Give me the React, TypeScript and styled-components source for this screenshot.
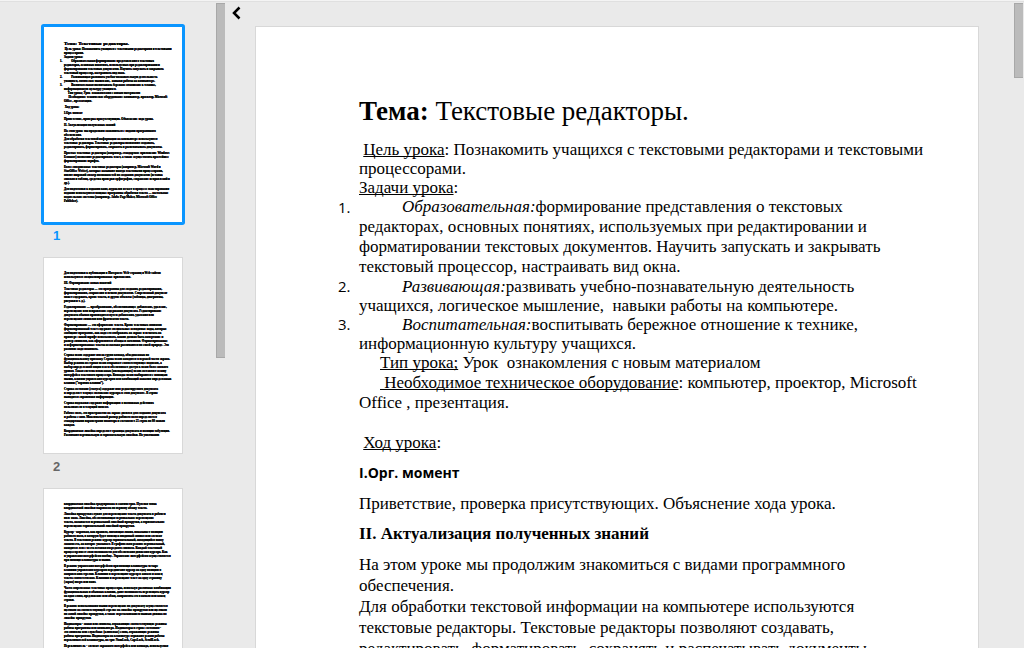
import React from "react";
import styled, { createGlobalStyle } from "styled-components";

const GlobalStyle = createGlobalStyle`
  * { box-sizing: border-box; }
  body { margin: 0; background: #eaeaea; }
`;

const Viewer = styled.div`
  display: flex;
  height: 100vh;
  overflow: hidden;
  border-top: 1px solid #f4f4f4;
  background: #eaeaea;
  font-family: "Liberation Sans", Arial, sans-serif;
`;

const Sidebar = styled.aside`
  display: flex;
  flex: none;
  width: 226px;
  border-top: 1px solid #e0e0e0;
`;

const ThumbList = styled.nav`
  flex: 1;
  display: flex;
  flex-direction: column;
  gap: 8px;
  padding: 24px 0 0 43px;
  overflow: hidden;
`;

const ThumbLink = styled.a`
  flex: none;
  width: 140px;
  color: #000;
  text-decoration: none;
`;

const ThumbPage = styled.span<{ $active?: boolean }>`
  display: block;
  height: 197px;
  padding: 13px 0 0 20px;
  overflow: hidden;
  background: #fff;
  border: 1px solid ${(p) => (p.$active ? "#0a95ff" : "#d8d8d8")};
  border-radius: ${(p) => (p.$active ? "1px" : "0")};
  box-shadow: ${(p) => (p.$active ? "0 0 0 2px #0a95ff" : "none")};
  font: bold 3px/4px "Liberation Serif", "Times New Roman", serif;
  text-shadow: 0 0 0 #000, 0 0 0 #000;
`;

const ThumbTitle = styled.span`
  display: block;
  margin: 1px 0;
  font-size: 5px;
  line-height: 5px;
`;

const ThumbBlock = styled.span<{ $flush?: boolean }>`
  display: block;
  margin-bottom: ${(p) => (p.$flush ? "0" : "2px")};
  white-space: pre;
`;

const ThumbItem = styled(ThumbBlock)`
  margin-left: -4px;
`;

const ThumbLabel = styled.span<{ $active?: boolean }>`
  display: block;
  padding: 5px 0 5px 10px;
  font-size: 13px;
  font-weight: bold;
  line-height: 16px;
  color: ${(p) => (p.$active ? "#0a95ff" : "#666")};
`;

const Scrollbar = styled.div`
  flex: none;
  width: 10px;
  padding-top: 1px;
`;

const ScrollThumb = styled.div<{ $length: number }>`
  width: 9px;
  height: ${(p) => p.$length}px;
  background: #bbb;
  border: 1px solid #a8a8a8;
  border-right: 0;
`;

const Main = styled.main`
  flex: 1;
  min-width: 0;
  display: flex;
  border-top: 1px solid #e0e0e0;
`;

const Collapse = styled.button`
  flex: none;
  display: flex;
  width: 29px;
  height: 24px;
  padding: 4px 0 0 5px;
  border: 0;
  background: none;
`;

const Canvas = styled.div`
  flex: 1;
  min-width: 0;
  padding: 24px 35px 0 0;
`;

const Page = styled.article`
  max-width: 960px;
  padding: 68px 36px 60px 82px;
  background: #fff;
  border: 1px solid #d8d8d8;
  color: #000;
  font: 17px/21px "Liberation Serif", "Times New Roman", serif;
  text-decoration-skip-ink: none;
`;

const Title = styled.h1`
  margin: 0 0 12px;
  padding-left: 21px;
  font-size: 27px;
  line-height: 33px;
  font-weight: normal;
`;

const Text = styled.p<{ $leading?: number; $after?: number }>`
  margin: 0 0 ${(p) => p.$after ?? 0}px;
  padding-left: 21px;
  line-height: ${(p) => p.$leading ?? 21}px;
  white-space: pre-wrap;
`;

const Heading = styled.h2<{ $sans?: boolean }>`
  margin: 0 0 10px;
  padding-left: 21px;
  font-size: ${(p) => (p.$sans ? "14px" : "17px")};
  line-height: 21px;
  font-family: ${(p) => (p.$sans ? '"Open Sans", sans-serif' : "inherit")};
`;

const Goals = styled.ol`
  margin: 0;
  padding: 0;
  list-style: none;
`;

const Goal = styled.li<{ $leading: number }>`
  display: grid;
  grid-template-columns: 21px 1fr;
  line-height: ${(p) => p.$leading}px;
`;

const Num = styled.span`
  font-family: "Open Sans", sans-serif;
  font-size: 15px;
`;

const GoalText = styled.span`
  text-indent: 43px;
  white-space: pre-wrap;
`;

const Indented = styled.span`
  display: block;
  text-indent: 21px;
`;

type Block = { text: string; flush?: boolean; item?: boolean };

const page1: Block[] = [
  { text: " Цель урока: Познакомить учащихся с текстовыми редакторами и текстовыми\nпроцессорами.\nЗадачи урока:", flush: true },
  { text: "1.            Образовательная:формирование представления о текстовых\nредакторах, основных понятиях, используемых при редактировании и\nформатировании текстовых документов. Научить запускать и закрывать\nтекстовый процессор, настраивать вид окна.", flush: true, item: true },
  { text: "2.            Развивающая:развивать учебно-познавательную деятельность\nучащихся, логическое мышление,  навыки работы на компьютере.", flush: true, item: true },
  { text: "3.            Воспитательная:воспитывать бережное отношение к технике,\nинформационную культуру учащихся.", flush: true, item: true },
  { text: "     Тип урока; Урок  ознакомления с новым материалом\n      Необходимое техническое оборудование: компьютер, проектор, Microsoft\nOffice , презентация." },
  { text: " Ход урока:" },
  { text: "I.Орг. момент" },
  { text: "Приветствие, проверка присутствующих. Объяснение хода урока." },
  { text: "II. Актуализация полученных знаний" },
  { text: "На этом уроке мы продолжим знакомиться с видами программного\nобеспечения.\nДля обработки текстовой информации на компьютере используются\nтекстовые редакторы. Текстовые редакторы позволяют создавать,\nредактировать, форматировать, сохранять и распечатывать документы." },
  { text: "Простые текстовые редакторы (например, стандартное приложение Windows\nБлокнот) позволяют редактировать текст, а также осуществлять простейшее\nформатирование шрифта." },
  { text: "Более совершенные текстовые редакторы (например, Microsoft Word и\nStarOffice Writer), которые называют иногда текстовыми процессорами,\nимеют широкий спектр возможностей по созданию документов (вставка\nсписков и таблиц, средства проверки орфографии, сохранение исправлений и\nдр.)." },
  { text: "Для подготовки к изданию книг, журналов и газет в процессе макетирования\nиздания используются мощные программы обработки текста — настольные\nиздательские системы (например, Adobe PageMaker, Microsoft Office\nPublisher)." },
];

const page2: Block[] = [
  { text: "Для подготовки к публикации в Интернете Web-страниц и Web-сайтов\nиспользуются специализированные приложения." },
  { text: "III. Формирование новых понятий" },
  { text: "Текстовые редакторы — это программы для создания, редактирования,\nформатирования, сохранения и печати документов. Современный документ\nможет содержать, кроме текста, и другие объекты (таблицы, диаграммы,\nрисунки и т. д.)." },
  { text: "Редактирование — преобразование, обеспечивающее добавление, удаление,\nперемещение или исправление содержания документа. Редактирование\nдокумента обычно производится путем добавления, удаления или\nперемещения символов или фрагментов текста." },
  { text: "Форматирование — это оформление текста. Кроме текстовых символов\nформатированный текст содержит специальные невидимые коды, которые\nсообщают программе, как надо его отображать на экране и печатать на\nпринтере: какой шрифт использовать, каким должно быть начертание и\nразмер символов, как оформляются абзацы и заголовки. Форматированные\nи неформатированные тексты несколько различаются по своей природе. Это\nразличие надо понимать." },
  { text: "Строка меню содержит имена групп команд, объединенных по\nфункциональному признаку. Строка меню находится в верхней части экрана.\nВыбор режима из строки меню открывает соответствующее подменю, а\nвыбор определенной опции в нем обеспечивает доступ к меню более низкого\nуровня. Такая система вложенных (ниспадающих) меню составляет основу\nинтерфейса текстового процессора. Команды меню выбираются с помощью\nмыши, клавиш управления курсором или комбинаций нажатия определенных\nклавиш (“горячих клавиш”)." },
  { text: "Строка состояния (статуса) содержит имя редактируемого документа\nи определяет текущее положение курсора в этом документе. В строке\nвыводится справочная информация." },
  { text: "Строка подсказки содержит информацию о возможных действиях\nпользователя в текущий момент." },
  { text: "Рабочее поле, это пространство на экране дисплея для создания документа\nи работы с ним. Максимальный размер рабочего поля определяется\nстандартными параметрами монитора и составляет 25 строк по 80 знаков\nкаждая." },
  { text: "Координатная линейка определяет границы документа и позиции табуляции.\nРазличают вертикальную и горизонтальную линейки. По умолчанию" },
];

const page3: Block[] = [
  { text: "координатная линейка градуирована в сантиметрах. Нулевая точка\nкоординатной линейки выровнена по первому абзацу текста." },
  { text: "Линейка прокрутки служит для перемещения текста документа в рабочем\nполе окна. Линейка, обеспечивающая вертикальное перемещение\nтекста, называется вертикальной линейкой прокрутки, а горизонтальное\nперемещение горизонтальной линейкой прокрутки." },
  { text: "Курсор - короткая, как правило, мигающая линия, показывает позицию\nрабочего поля, в которую будет помещен вводимый символ или элемент\nтекста. В текстовом режиме курсор горизонтальный, находящийся внизу\nзнакоместа, на которое указывает. В графическом режиме вертикальный,\nнаходится левее места вставки очередного символа. Каждый текстовый\nпроцессор имеет свои возможности для обеспечения движения курсора. Как\nи управления интерфейсом вообще. Управление интерфейсом осуществляется\nпри помощи клавиатуры и мыши." },
  { text: "В режиме управления интерфейсом при помощи клавиатуры четыре\nклавиши управления курсором передвигают курсор на одну позицию в\nнаправлении стрелки. Клавиши и перемещают курсор в начало и конец\nтекста соответственно. Клавиши и перемещают текст на одну страницу\n(экран) вверх или вниз." },
  { text: "Часто современные текстовые процессоры, используя различные комбинации\nфункциональных и обычных клавиш, дают возможность перемещать курсор\nна одно слово, предложение или абзац, направлять его в начало или конец\nстроки." },
  { text: "В режиме использования мыши перемещение по документу осуществляется\nщелчком на соответствующей стрелке на линейке прокрутки или щелчком\nпо самой линейке прокрутки, а также перетаскиванием мышью движка по\nлинейке прокрутки." },
  { text: "Индикаторы - знаки или символы, отражающие соответствующие режимы\nработы программы или компьютера. Индикаторы в строке состояния -\nэто символы или служебные (ключевые) слова, отражающие режимы\nработы программы. Индикаторы на клавиатуре отражают режим работы\nпереключателей клавиатуры, их три: NumLock, CapsLock, ScrollLock." },
  { text: "Переключатель - элемент экранного интерфейса или команда, используемая\nдля включения или выключения того или иного режима." },
];

function ThumbBlocks({ blocks }: { blocks: Block[] }) {
  return (
    <>
      {blocks.map((b, i) => {
        if (b.item) {
          const [first, ...rest] = b.text.split("\n");
          return (
            <React.Fragment key={i}>
              <ThumbItem $flush>{first}</ThumbItem>
              <ThumbBlock $flush>{rest.join("\n")}</ThumbBlock>
            </React.Fragment>
          );
        }
        return <ThumbBlock key={i} $flush={b.flush}>{b.text}</ThumbBlock>;
      })}
    </>
  );
}

export default function App() {
  return (
    <Viewer>
      <GlobalStyle />
      <Sidebar>
        <ThumbList aria-label="Страницы">
          <ThumbLink href="#page-1" aria-current="page">
            <ThumbPage $active>
              <ThumbTitle>Тема: Текстовые редакторы.</ThumbTitle>
              <ThumbBlocks blocks={page1} />
            </ThumbPage>
            <ThumbLabel $active>1</ThumbLabel>
          </ThumbLink>
          <ThumbLink href="#page-2">
            <ThumbPage>
              <ThumbBlocks blocks={page2} />
            </ThumbPage>
            <ThumbLabel>2</ThumbLabel>
          </ThumbLink>
          <ThumbLink href="#page-3">
            <ThumbPage>
              <ThumbBlocks blocks={page3} />
            </ThumbPage>
            <ThumbLabel>3</ThumbLabel>
          </ThumbLink>
        </ThumbList>
        <Scrollbar>
          <ScrollThumb $length={355} />
        </Scrollbar>
      </Sidebar>
      <Main>
        <Collapse aria-label="Скрыть панель">
          <svg width="12" height="14" viewBox="0 0 12 14" fill="none" stroke="#000" strokeWidth="2.5">
            <path d="M8.500 1.500L3 7l5.500 5.500" />
          </svg>
        </Collapse>
        <Canvas>
          <Page id="page-1">
            <Title><b>Тема:</b> Текстовые редакторы.</Title>
            <Text $leading={19}>
              {" "}<u>Цель урока</u>{": Познакомить учащихся с текстовыми редакторами и текстовыми"}<br />
              процессорами.<br />
              <u>Задачи урока</u>:
            </Text>
            <Goals>
              <Goal $leading={20}>
                <Num>1.</Num>
                <GoalText>
                  <i>Образовательная:</i>формирование представления о текстовых<br />
                  редакторах, основных понятиях, используемых при редактировании и<br />
                  форматировании текстовых документов. Научить запускать и закрывать<br />
                  текстовый процессор, настраивать вид окна.
                </GoalText>
              </Goal>
              <Goal $leading={19}>
                <Num>2.</Num>
                <GoalText>
                  <i>Развивающая:</i>развивать учебно-познавательную деятельность<br />
                  {"учащихся, логическое мышление,  навыки работы на компьютере."}
                </GoalText>
              </Goal>
              <Goal $leading={19}>
                <Num>3.</Num>
                <GoalText>
                  <i>Воспитательная:</i>воспитывать бережное отношение к технике,<br />
                  информационную культуру учащихся.
                </GoalText>
              </Goal>
            </Goals>
            <Text as="div" $leading={20} $after={19}>
              <Indented><u>Тип урока;</u>{" Урок  ознакомления с новым материалом"}</Indented>
              <Indented><u>{"\u00a0Необходимое техническое оборудование"}</u>: компьютер, проектор, Microsoft</Indented>
              Office , презентация.
            </Text>
            <Text $after={9}>{" "}<u>Ход урока</u>:</Text>
            <Heading $sans>I.Орг. момент</Heading>
            <Text $after={9}>Приветствие, проверка присутствующих. Объяснение хода урока.</Text>
            <Heading>II. Актуализация полученных знаний</Heading>
            <Text>
              На этом уроке мы продолжим знакомиться с видами программного<br />
              обеспечения.<br />
              Для обработки текстовой информации на компьютере используются<br />
              текстовые редакторы. Текстовые редакторы позволяют создавать,<br />
              редактировать, форматировать, сохранять и распечатывать документы.
            </Text>
          </Page>
        </Canvas>
        <Scrollbar>
          <ScrollThumb $length={75} />
        </Scrollbar>
      </Main>
    </Viewer>
  );
}
